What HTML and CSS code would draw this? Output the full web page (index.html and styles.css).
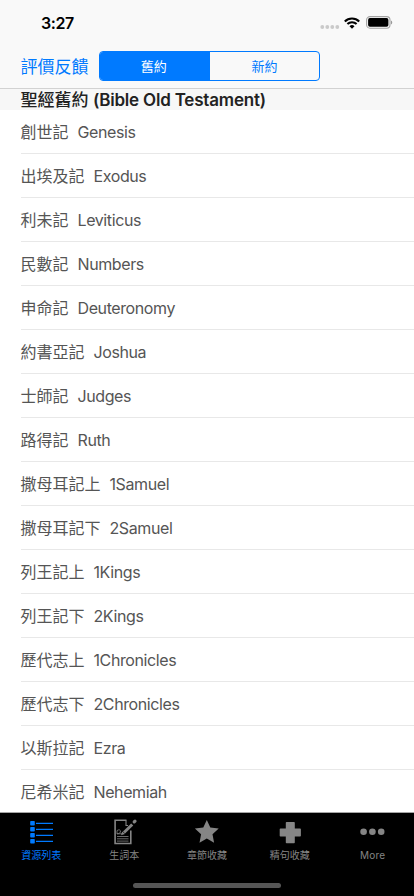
FILE: index.html
```html
<!DOCTYPE html>
<html lang="zh-Hant">
<head>
  <meta charset="UTF-8">
  <meta name="viewport" content="width=device-width, initial-scale=1.0">
  <title>聖經舊約</title>
  <link rel="stylesheet" href="styles.css">
</head>
<body>
  <header class="top">
    <div class="status">
      <span class="time">3:27</span>
      <div class="status-icons">
        <svg class="signal" width="20" height="4" viewBox="0 0 20 4" fill="#cacaca"><circle cx="2.3" cy="2" r="1.9"/><circle cx="7.3" cy="2" r="1.9"/><circle cx="12.3" cy="2" r="1.9"/><circle cx="17.3" cy="2" r="1.9"/></svg>
        <svg class="wifi" width="16" height="12" viewBox="0 0 16 12" fill="none" stroke="#000" stroke-width="2.1"><path d="M.8 4.4a10.3 10.3 0 0 1 14.4 0M3.4 7.1a6.6 6.6 0 0 1 9.2 0"/><path d="M8 11.7 5.5 9.2a3.6 3.6 0 0 1 5 0z" fill="#000" stroke="none"/></svg>
        <svg class="battery" width="27" height="13" viewBox="0 0 27 13"><rect x=".6" y=".6" width="23.4" height="11.6" rx="3.4" fill="none" stroke="#a3a3a3" stroke-width="1.1"/><rect x="2.1" y="2.1" width="20.3" height="8.6" rx="1.8"/><path d="M25 4.4c1.7.7 1.7 3.3 0 4z" fill="#999"/></svg>
      </div>
    </div>
    <nav class="navbar">
      <a class="feedback">評價反饋</a>
      <div class="segmented">
        <span class="segment selected">舊約</span>
        <span class="segment">新約</span>
      </div>
    </nav>
  </header>

  <main class="list">
    <h2 class="section-title">聖經舊約 <span>(Bible Old Testament)</span></h2>
    <ul class="books">
      <li class="book">創世記<span>Genesis</span></li>
      <li class="book">出埃及記<span>Exodus</span></li>
      <li class="book">利未記<span>Leviticus</span></li>
      <li class="book">民數記<span>Numbers</span></li>
      <li class="book">申命記<span>Deuteronomy</span></li>
      <li class="book">約書亞記<span>Joshua</span></li>
      <li class="book">士師記<span>Judges</span></li>
      <li class="book">路得記<span>Ruth</span></li>
      <li class="book">撒母耳記上<span>1Samuel</span></li>
      <li class="book">撒母耳記下<span>2Samuel</span></li>
      <li class="book">列王記上<span>1Kings</span></li>
      <li class="book">列王記下<span>2Kings</span></li>
      <li class="book">歷代志上<span>1Chronicles</span></li>
      <li class="book">歷代志下<span>2Chronicles</span></li>
      <li class="book">以斯拉記<span>Ezra</span></li>
      <li class="book">尼希米記<span>Nehemiah</span></li>
    </ul>
  </main>

  <footer class="bottom">
    <nav class="tabs">
      <a class="tab active">
        <svg width="30" height="30" viewBox="0 0 30 30" fill="currentColor"><rect x="4.2" y="4" width="4.6" height="4.6" rx=".8"/><rect x="4.2" y="10" width="4.6" height="4.6" rx=".8"/><rect x="4.2" y="16" width="4.6" height="4.6" rx=".8"/><rect x="4.2" y="22" width="4.6" height="4.6" rx=".8"/><path d="M10 5.7h17v1.3H10zM10 11.7h17v1.3H10zM10 17.7h17v1.3H10zM10 23.7h17v1.3H10z"/></svg>
        <span>資源列表</span>
      </a>
      <a class="tab">
        <svg width="30" height="30" viewBox="0 0 30 30" fill="none" stroke="currentColor"><path d="M17.5 3.3H6.1v23.2h15.7V13.5" stroke-width="1.6"/><path d="M17 3.5v5h2" stroke-width="1.1"/><path d="m15 15.5 8.2-8" stroke-width="3"/><path d="m25.2 4.9.8-.8" stroke-width="3.2" stroke-linecap="round"/><path d="m12 18.2 1.3-3.7 2.7 2.4z" fill="currentColor" stroke="none"/><path d="M8 17v-3.4c1.8-1.5 4-.7 3.4 1.4-.4 1.5-2 1.7-3.4 1.8h5M8 19.5h11.5M8 21.8h11.5M8 24.1h11.5" stroke-width=".8"/></svg>
        <span>生詞本</span>
      </a>
      <a class="tab">
        <svg width="30" height="30" viewBox="0 0 30 30" fill="currentColor"><path d="m14.8 2.9 3.5 7.7 8.4 1-6.2 5.7 1.6 8.4-7.3-4.2-7.3 4.2 1.6-8.4-6.2-5.7 8.4-1z"/></svg>
        <span>章節收藏</span>
      </a>
      <a class="tab">
        <svg width="30" height="30" viewBox="0 0 30 30" fill="currentColor"><path d="M11.6 5H19q.8 0 .8.8v5.6h5.3q.8 0 .8.8v6.6q0 .8-.8.8h-5.3v5.9q0 .8-.8.8h-7.4q-.8 0-.8-.8v-5.9H5.5q-.8 0-.8-.8v-6.6q0-.8.8-.8h5.3V5.8q0-.8.8-.8z"/></svg>
        <span>精句收藏</span>
      </a>
      <a class="tab">
        <svg width="30" height="30" viewBox="0 0 30 30" fill="currentColor"><circle cx="5.6" cy="14.7" r="3.3"/><circle cx="14.4" cy="14.7" r="3.3"/><circle cx="23.2" cy="14.7" r="3.3"/></svg>
        <span class="more">More</span>
      </a>
    </nav>
    <div class="home-indicator"></div>
  </footer>
</body>
</html>
```

FILE: styles.css
```css
* { box-sizing: border-box; }
body {
  margin: 0;
  height: 896px;
  display: flex;
  flex-direction: column;
  overflow: hidden;
  font-family: Inter, "Noto Sans CJK TC", sans-serif;
  background: #fff;
}

/* Status bar and navigation */
.top {
  height: 89px;
  flex: none;
  background: #f9f9f9;
  border-bottom: 1px solid #d2d2d2;
}
.status {
  height: 44px;
  padding: 1px 21px 0 41px;
  display: flex;
  align-items: center;
  justify-content: space-between;
}
.time {
  font-size: 16px;
  font-weight: 600;
  letter-spacing: -0.4px;
}
.status-icons { display: flex; align-items: center; }
.signal { margin: 9px 4px 0 0; }
.wifi { margin-right: 6px; }
.navbar {
  height: 44px;
  padding-left: 20.5px;
  display: flex;
  align-items: center;
}
.feedback {
  width: 78px;
  padding-top: 1px;
  font-size: 17px;
  line-height: 24px;
  color: #007aff;
}
.segmented {
  width: 221.5px;
  height: 30px;
  display: flex;
  border: 1px solid #007aff;
  border-radius: 4px;
  overflow: hidden;
}
.segment {
  flex: 1;
  font-size: 13px;
  line-height: 28px;
  text-align: center;
  color: #007aff;
}
.selected { padding-right: 2px; background: #007aff; color: #fff; }

/* Book list */
.list { height: 723px; flex: none; overflow: hidden; }
.section-title {
  height: 21px;
  margin: 0;
  padding-left: 20.5px;
  font-size: 17px;
  font-weight: 500;
  line-height: 22px;
  white-space: nowrap;
  color: #222;
  background: #f7f7f7;
}
.section-title span { font-weight: 600; letter-spacing: -0.2px; }
.books { margin: 0; padding: 0 0 0 20.5px; list-style: none; }
.book {
  height: 44px;
  display: flex;
  gap: 9px;
  font-size: 16px;
  line-height: 44px;
  color: #555;
  border-bottom: 1px solid #e8e8e8;
}
.book span { letter-spacing: -0.4px; }

/* Tab bar */
.bottom {
  height: 84px;
  flex: none;
  padding-bottom: 8px;
  display: flex;
  flex-direction: column;
  justify-content: space-between;
  align-items: center;
  background: #000;
  border-top: 1px solid #a5a5a5;
}
.tabs { width: 100%; display: flex; justify-content: space-between; }
.tab {
  width: 82.6px;
  padding-top: 4px;
  display: flex;
  flex-direction: column;
  align-items: center;
  font-size: 10px;
  line-height: 16px;
  color: #858585;
}
.tab svg { display: block; }
.active { color: #007aff; }
.more { letter-spacing: 0.2px; }
.home-indicator { width: 148px; height: 5px; border-radius: 3px; background: #555; }
```
